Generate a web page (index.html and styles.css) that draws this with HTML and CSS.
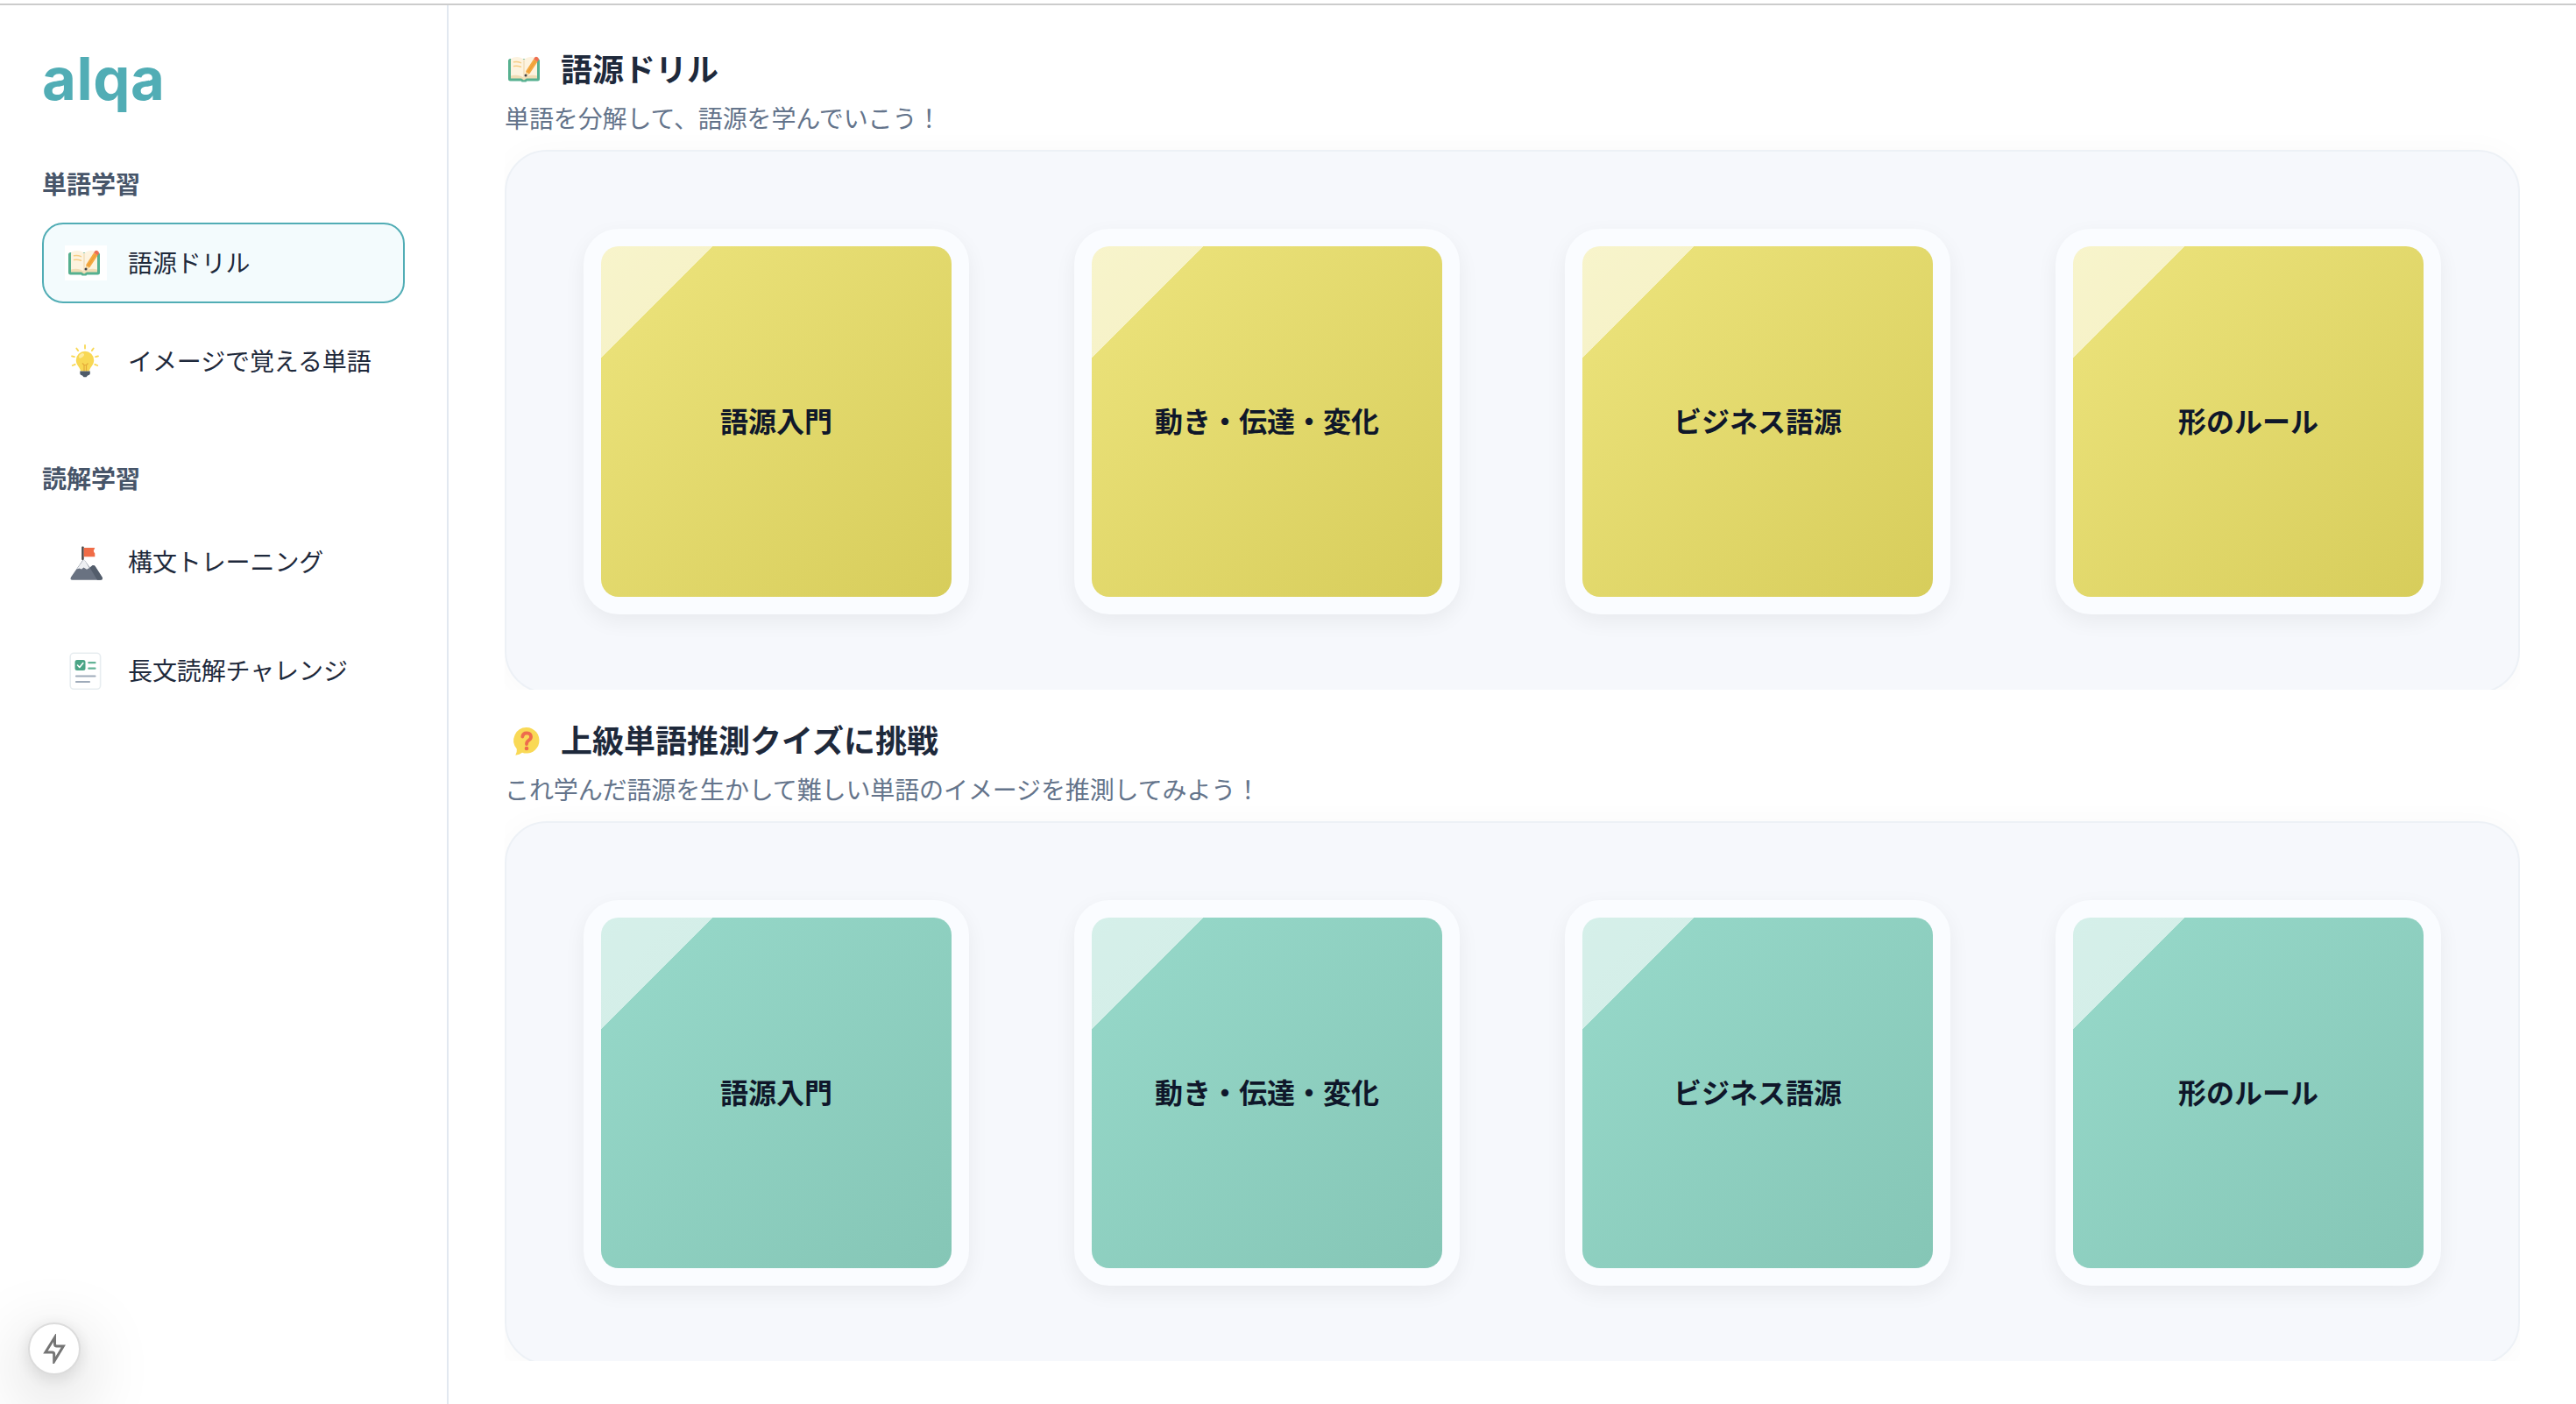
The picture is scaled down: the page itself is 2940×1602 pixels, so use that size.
FILE: index.html
```html
<!DOCTYPE html>
<html lang="ja">
<head>
    <meta charset="UTF-8">
    <meta name="viewport" content="width=device-width, initial-scale=1.0">
    <title>alqa - 語源ドリル</title>
    <link rel="stylesheet" href="styles.css">
</head>
<body>
    <!-- 共通アイコン -->
    <svg class="sprite" width="0" height="0">
        <symbol id="icon-book" viewBox="0 0 48 40">
            <rect x="4" y="8" width="36" height="25.5" rx="2.5" fill="#56b08f"/>
            <path d="M18 32h8l-1.500 2.500h-5z" fill="#56b08f"/>
            <path d="M7 8.500C11 5 18 5.500 22 9C26 5.500 33 5 37 8.500V30H7Z" fill="#fdf3df"/>
            <path d="M7 27.500C12 26 18 26.500 22 30C26 26.500 32 26 37 27.500V30.500H25L22 32.500L19 30.500H7Z" fill="#f0dcb4"/>
            <path d="M22 9.500V31" stroke="#f1dfbd" stroke-width="1.500"/>
            <path d="M10.500 11.800q4-.8 8 .8M10.500 16.500q4-.8 8 .8" stroke="#f6cd85" stroke-width="1.500" fill="none" stroke-linecap="round"/>
            <path d="M24.300 22L33 8.500L37.500 11.500L28.500 25L23.500 28.500Z" fill="#f4a83f"/>
            <path d="M26.500 23.500L35.300 10" stroke="#ee9a30" stroke-width="1"/>
            <path d="M33 8.500L34.500 6.300Q36 5.300 37.800 6.600Q39.500 8 38.800 9.600L37.500 11.500Z" fill="#ee6f50"/>
            <path d="M24.200 23L28 25.300L24 28.500Z" fill="#f6dba8"/>
            <circle cx="24" cy="27" r="1.500" fill="#3c3f46"/>
        </symbol>
    </svg>

    <div class="topbar"></div>

    <div class="layout">
        <aside class="sidebar">
            <div class="logo">alqa</div>

            <nav class="nav-group">
                <div class="nav-title">単語学習</div>
                <a class="nav-item active">
                    <svg class="nav-icon icon-white" viewBox="0 0 48 40"><use href="#icon-book"/></svg>
                    <span>語源ドリル</span>
                </a>
                <a class="nav-item">
                    <svg class="nav-icon" viewBox="0 0 48 40">
                        <g stroke="#f8d854" stroke-width="1.800" stroke-linecap="round">
                            <path d="M23 2v3.500M13.300 5.500l1.900 2.600M32.700 5.500l-1.900 2.600M8 14.300l3 .8M38 14.300l-3 .8M8.700 25l3-1.200M37.300 25l-3-1.200"/>
                        </g>
                        <path d="M23 8.700A10.200 10.200 0 0 0 12.800 18.900C12.800 25 17.500 26.500 18 31.500H28C28.500 26.500 33.200 25 33.200 18.900A10.200 10.200 0 0 0 23 8.700Z" fill="#f8d854"/>
                        <ellipse cx="19" cy="13.800" rx="3.500" ry="2" fill="#fdeb9d" transform="rotate(-42 19 13.800)"/>
                        <path d="M20 22.500l2 2V31.500M26.500 22.500l-2 2V31.500M22 24.500h2.500" stroke="#e5aa39" stroke-width="1.200" fill="none"/>
                        <path d="M17.300 31.500H28.800V34.500Q28.500 36 26 36.500L24.500 38.200H21.500L20 36.500Q17.500 36 17.300 34.500Z" fill="#4f5b69"/>
                    </svg>
                    <span>イメージで覚える単語</span>
                </a>
            </nav>

            <nav class="nav-group reading">
                <div class="nav-title">読解学習</div>
                <a class="nav-item">
                    <svg class="nav-icon tall" viewBox="0 0 48 48">
                        <path d="M20.500 22L7 41.500Q5.500 44.700 8.500 44.700H40.500Q44 44.700 42.500 41.500L34.500 29Q32.500 27 30.500 29L28.500 30.500L22.500 22Z" fill="#697281"/>
                        <path d="M30 29.500Q32.500 26.800 34.500 29L42.500 41.500Q44 44.700 40.500 44.700H37L28.700 31Z" fill="#535d6b"/>
                        <path d="M21 22L13.500 32.500L16.500 31.500L19 32.500L21.500 30.500L25 32.800L28 31L22.500 22Z" fill="#edeff2"/>
                        <rect x="19.200" y="6.500" width="2.500" height="15.500" rx="1" fill="#464647"/>
                        <path d="M21.700 8H34.300L32.800 11.500Q33 13 34.300 14.500V18.300H21.700Z" fill="#f06c47"/>
                    </svg>
                    <span>構文トレーニング</span>
                </a>
                <a class="nav-item">
                    <svg class="nav-icon tall" viewBox="0 0 48 48">
                        <rect x="6.200" y="4.300" width="34.400" height="41" rx="4" fill="#fff" stroke="#e7edf0" stroke-width="1.600"/>
                        <rect x="11.500" y="12" width="12" height="12" rx="2.500" fill="#4ba586"/>
                        <path d="M14.500 18l2.300 2.500l4-5" fill="none" stroke="#fff" stroke-width="1.600" stroke-linecap="round" stroke-linejoin="round"/>
                        <path d="M27.300 15.200h7.200M27.300 21.700h7.200" stroke="#63b396" stroke-width="2.200" stroke-linecap="round"/>
                        <path d="M13 30.500h21.500M13 37h15" stroke="#9fabba" stroke-width="2.200" stroke-linecap="round"/>
                    </svg>
                    <span>長文読解チャレンジ</span>
                </a>
            </nav>
        </aside>

        <main class="main">
            <section class="course">
                <h2 class="course-title">
                    <svg class="title-icon" viewBox="0 0 48 40"><use href="#icon-book"/></svg>
                    <span>語源ドリル</span>
                </h2>
                <p class="course-desc">単語を分解して、語源を学んでいこう！</p>
                <div class="scroll-area">
                    <div class="panel">
                        <div class="card"><div class="tile yellow">語源入門</div></div>
                        <div class="card"><div class="tile yellow">動き・伝達・変化</div></div>
                        <div class="card"><div class="tile yellow">ビジネス語源</div></div>
                        <div class="card"><div class="tile yellow">形のルール</div></div>
                    </div>
                </div>
            </section>

            <section class="course">
                <h2 class="course-title">
                    <svg class="title-icon" viewBox="0 0 48 40">
                        <path d="M25 5A14.500 14.800 0 1 1 20 33.700Q17 36 12.300 36.800Q14.300 33 13.800 29.500A14.500 14.800 0 0 1 25 5Z" fill="#f9d956"/>
                        <path d="M20.300 15.500Q20.800 11.300 25.200 11.300Q30 11.500 30 15.800Q30 18.300 27.300 19.800Q25 21.300 25 24" fill="none" stroke="#ee6c4d" stroke-width="3.800" stroke-linecap="round"/>
                        <circle cx="25" cy="29" r="2.300" fill="#ee6c4d"/>
                    </svg>
                    <span>上級単語推測クイズに挑戦</span>
                </h2>
                <p class="course-desc">これ学んだ語源を生かして難しい単語のイメージを推測してみよう！</p>
                <div class="scroll-area">
                    <div class="panel">
                        <div class="card"><div class="tile green">語源入門</div></div>
                        <div class="card"><div class="tile green">動き・伝達・変化</div></div>
                        <div class="card"><div class="tile green">ビジネス語源</div></div>
                        <div class="card"><div class="tile green">形のルール</div></div>
                    </div>
                </div>
            </section>
        </main>
    </div>

    <div class="indicator">
        <svg viewBox="0 0 32 34" width="32" height="34">
            <path d="M16.500 4L5.900 21H13.500Q15.700 21 15.700 23.200V31.500L26.300 14H18.700Q16.500 14 16.500 11.800Z" fill="none" stroke="#757575" stroke-width="3"/>
        </svg>
    </div>
</body>
</html>
```

FILE: styles.css
```css
* {
    box-sizing: border-box;
}
body {
    margin: 0;
    height: 1602px;
    overflow: hidden;
    font-family: "Noto Sans CJK JP", "Noto Sans", sans-serif;
    background-color: #fff;
    color: #1e293b;
}
.sprite {
    display: none;
}
.topbar {
    height: 6px;
    border-bottom: 2px solid #ccc;
}
.layout {
    display: flex;
    height: 1596px;
}

/* サイドバー */
.sidebar {
    width: 512px;
    padding: 42px 48px 0;
    border-right: 2px solid #e2e8f0;
}
.logo {
    height: 140px;
    font-family: Inter, sans-serif;
    font-size: 67px;
    font-weight: 700;
    line-height: 84px;
    letter-spacing: 0.6px;
    color: #51adb5;
}
.nav-group {
    display: flex;
    flex-direction: column;
    gap: 20px;
}
.nav-group.reading {
    gap: 32px;
    margin-top: 66px;
}
.nav-title {
    line-height: 42px;
    margin-bottom: 4px;
    font-size: 28px;
    font-weight: 700;
    color: #475569;
}
.reading .nav-title {
    margin-bottom: -3px;
}
.nav-item {
    display: flex;
    align-items: center;
    gap: 24px;
    height: 92px;
    padding: 0 24px;
    border: 2px solid transparent;
    border-radius: 24px;
    font-size: 28px;
    letter-spacing: -0.1px;
    white-space: nowrap;
}
.nav-item span {
    padding-bottom: 3px;
}
.nav-item.active {
    border-color: #51adb5;
    background-color: #f3fbfd;
}
.nav-icon {
    flex: none;
    width: 48px;
    height: 40px;
}
.nav-icon.tall {
    height: 48px;
}
.icon-white {
    background-color: #fff;
}

/* メイン */
.main {
    flex: 1;
    padding: 45px 64px 0;
}
.course {
    height: 766px;
}
.course-title {
    display: flex;
    align-items: center;
    gap: 16px;
    margin: 0;
    height: 56px;
    font-size: 36px;
    font-weight: 700;
}
.course-title span {
    padding-bottom: 4px;
}
.title-icon {
    width: 48px;
    height: 40px;
}
.course-desc {
    margin: 7px 0 0;
    font-size: 28px;
    line-height: 40px;
    letter-spacing: -0.12px;
    color: #64748b;
}
.scroll-area {
    height: 633px;
    padding-top: 17px;
    overflow: hidden;
}
.panel {
    display: flex;
    justify-content: space-between;
    height: 620px;
    padding: 88px;
    border: 2px solid #edf1f6;
    border-radius: 48px;
    background-color: #f6f8fc;
    box-shadow: 0 4px 40px rgba(0,0,0,0.03);
}
.card {
    width: 440px;
    height: 440px;
    padding: 20px;
    border-radius: 40px;
    background-color: #fafcff;
    box-shadow: 0 8px 24px rgba(0,0,0,0.06);
}
.tile {
    display: flex;
    align-items: center;
    justify-content: center;
    height: 400px;
    padding-bottom: 5px;
    border-radius: 20px;
    font-size: 32px;
    font-weight: 700;
    color: #0f172a;
}
.yellow {
    background: linear-gradient(135deg, rgba(255,255,255,0.6) 16%, transparent 16%), linear-gradient(135deg, #ede47d, #d7cd5b);
}
.green {
    background: linear-gradient(135deg, rgba(255,255,255,0.6) 16%, transparent 16%), linear-gradient(135deg, #97d9ca, #85c6b6);
}

/* 左下のインジケーター */
.indicator {
    position: fixed;
    left: 32px;
    bottom: 33px;
    display: flex;
    align-items: center;
    justify-content: center;
    width: 60px;
    height: 60px;
    border: 2px solid #dcdcdc;
    border-radius: 50%;
    background-color: #fff;
    box-shadow: 0 22px 80px rgba(0,0,0,0.25), 0 4px 20px rgba(0,0,0,0.12);
}
```
